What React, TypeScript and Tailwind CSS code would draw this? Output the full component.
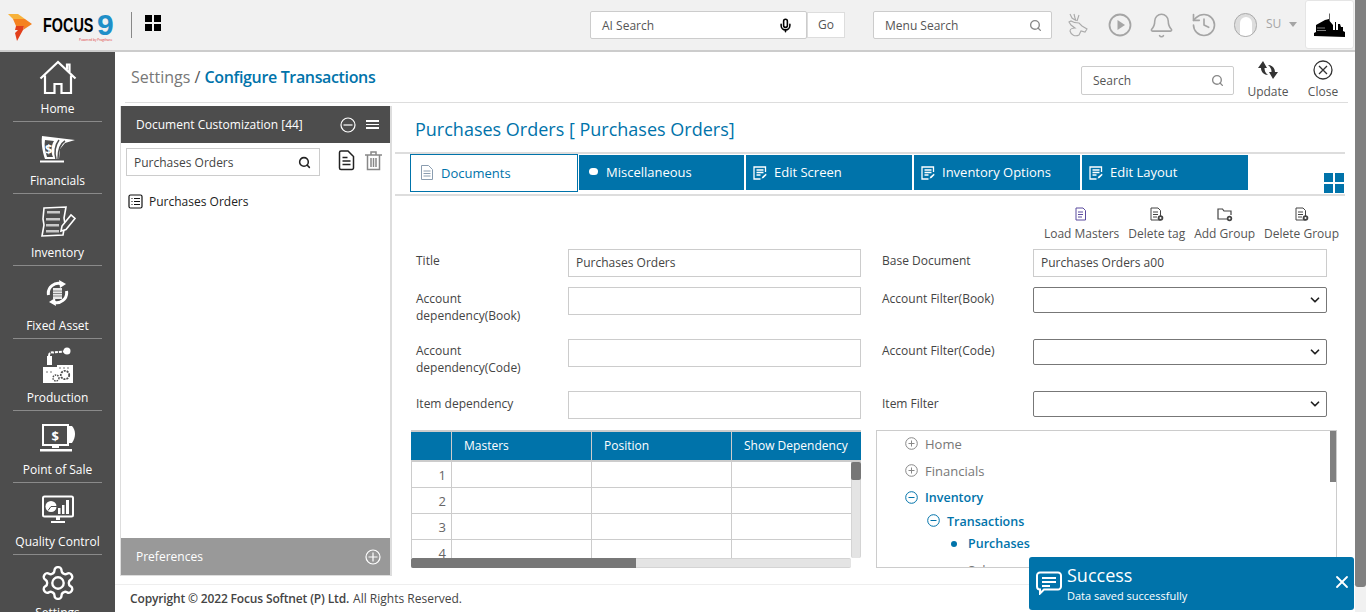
import { Bell, ChevronDown, History, Mic, Search, X } from "lucide-react";
import type { ReactNode } from "react";

const font = { fontFamily: '"Open Sans", "Noto Sans", sans-serif' };

function HomeIcon() {
  return (
    <svg width="38" height="36" viewBox="0 0 38 36" fill="none" stroke="#fff" strokeWidth="2.2">
      <path d="M1.500 18.500 19 2l17.500 16.500M28 9.500V4.500h2.500v7.500M6 15.500V33h9.500V24h7v9H32V15.500" />
    </svg>
  );
}

function FinancialsIcon() {
  return (
    <svg width="38" height="28" viewBox="0 0 38 28" fill="none">
      <path d="M3 1 36 5 26 8 21 14 20 24H6C4 18 2 10 3 1z" fill="#fff" />
      <path d="M6 5 15 6C12 10 12 18 14 22H8C6 16 5 10 6 5z" fill="#4d4d4d" />
      <path d="M20 5C16 10 15 18 17 24M26 6C21 9 19 15 19 24" stroke="#4d4d4d" strokeWidth="1.5" />
      <text x="6" y="19" fill="#fff" fontSize="13" fontWeight="700" fontFamily="Open Sans">$</text>
      <path d="M1 25.500h24v2H1z" fill="#fff" />
    </svg>
  );
}

function InventoryIcon() {
  return (
    <svg width="36" height="31" viewBox="0 0 36 31" fill="none">
      <path d="M4 2 26 1 24 12 25 18 23 29 2 30 4 19 3 13z" stroke="#fff" strokeWidth="1.600" />
      <path d="M7 5h13v2.500H7zM6 12h14v2.500H6zM6 18h13v2.500H6zM6 24h13v2.500H6z" fill="#c8c8c8" />
      <path d="M21 25 22 20 31 9l4 3.500-9 11z" fill="#4d4d4d" stroke="#fff" strokeWidth="1.600" />
    </svg>
  );
}

function FixedAssetIcon() {
  return (
    <svg width="23" height="26" viewBox="0 0 23 26" fill="none">
      <path d="M16 4A10 10 0 0 0 2.500 15M7 22A10 10 0 0 0 20.500 11" stroke="#fff" strokeWidth="3" />
      <path d="m13 0 7 4-6 4zM10 26l-7-4 6-4z" fill="#fff" />
      <path d="M7 8h9v11H7z" fill="#e8e8e8" />
      <path d="M7 11h9M7 13.500h9M7 16h9" stroke="#888" />
    </svg>
  );
}

function ProductionIcon() {
  return (
    <svg width="32" height="37" viewBox="0 0 32 37" fill="none">
      <path d="M7 9C7 6 9 5 11 5.500L22 4.500" stroke="#fff" strokeWidth="2" strokeDasharray="3 1" />
      <circle cx="25" cy="4" r="3.500" fill="#fff" />
      <path d="M5 9h5v9H5z" fill="#fff" />
      <path d="M1 36V20h14v-2h16v18z" fill="#fff" />
      <path d="M4 25h2m2 0h2M17 21h2m2 0h2m2 0h2" stroke="#777" />
      <circle cx="23" cy="28" r="4.200" fill="#fff" stroke="#4d4d4d" strokeWidth="1.800" strokeDasharray="2 1" />
      <circle cx="14" cy="31" r="3" fill="#fff" stroke="#4d4d4d" strokeWidth="1.400" strokeDasharray="1.500 1" />
    </svg>
  );
}

function PosIcon() {
  return (
    <svg width="38" height="28" viewBox="0 0 38 28" fill="none">
      <rect x="4" y="1" width="25" height="20" fill="none" stroke="#fff" strokeWidth="2" />
      <path d="M30 2h3c2 2 3 5 3 8s-1 6-3 9h-3z" fill="#fff" />
      <text x="12.500" y="17" fill="#fff" fontSize="13" fontWeight="700" fontFamily="Open Sans">$</text>
      <path d="M13 21h7v3h-7zM1 25h32v2.500H1z" fill="#fff" />
    </svg>
  );
}

function QualityIcon() {
  return (
    <svg width="34" height="30" viewBox="0 0 34 30" fill="none">
      <rect x="2" y="1.500" width="30" height="20" rx="1.500" stroke="#fff" strokeWidth="2" />
      <circle cx="10" cy="11.500" r="5.500" fill="#fff" />
      <path d="M10 11.500h6M10 11.500l-3 4" stroke="#4d4d4d" />
      <path d="M17 13h2.500v6H17zM21 10h2.500v9H21zM25 5h3v14h-3z" fill="#fff" />
      <path d="M15 22h4v3h-4zM10 26h14v2H10z" fill="#fff" />
    </svg>
  );
}

function SettingsIcon() {
  return (
    <svg width="38" height="38" viewBox="0 0 24 24" fill="none" stroke="#fff" strokeWidth="1.5" strokeLinecap="round" strokeLinejoin="round">
      <path d="M12.220 2h-.44a2 2 0 0 0-2 2v.18a2 2 0 0 1-1 1.730l-.43.25a2 2 0 0 1-2 0l-.15-.08a2 2 0 0 0-2.730.73l-.22.38a2 2 0 0 0 .73 2.730l.15.1a2 2 0 0 1 1 1.720v.51a2 2 0 0 1-1 1.740l-.15.09a2 2 0 0 0-.73 2.730l.22.38a2 2 0 0 0 2.730.73l.15-.08a2 2 0 0 1 2 0l.43.25a2 2 0 0 1 1 1.730V20a2 2 0 0 0 2 2h.44a2 2 0 0 0 2-2v-.18a2 2 0 0 1 1-1.730l.43-.25a2 2 0 0 1 2 0l.15.08a2 2 0 0 0 2.730-.73l.22-.39a2 2 0 0 0-.73-2.730l-.15-.08a2 2 0 0 1-1-1.740v-.5a2 2 0 0 1 1-1.740l.15-.09a2 2 0 0 0 .73-2.730l-.22-.38a2 2 0 0 0-2.730-.73l-.15.08a2 2 0 0 1-2 0l-.43-.25a2 2 0 0 1-1-1.730V4a2 2 0 0 0-2-2z" />
      <circle cx="12" cy="12" r="3.600" />
    </svg>
  );
}

const navItems: { label: string; icon: ReactNode }[] = [
  { label: "Home", icon: <HomeIcon /> },
  { label: "Financials", icon: <FinancialsIcon /> },
  { label: "Inventory", icon: <InventoryIcon /> },
  { label: "Fixed Asset", icon: <FixedAssetIcon /> },
  { label: "Production", icon: <ProductionIcon /> },
  { label: "Point of Sale", icon: <PosIcon /> },
  { label: "Quality Control", icon: <QualityIcon /> },
];

function Sidebar() {
  return (
    <aside className="w-[115px] shrink-0 bg-[#4d4d4d] flex flex-col items-center overflow-hidden text-white text-[12px]">
      {navItems.map((item, i) => (
        <div
          key={item.label}
          className={`w-[89px] shrink-0 border-b border-[#8a8a8a] flex flex-col items-center ${i === 0 ? "h-[70px]" : "h-[72.2px]"}`}
        >
          <div className="flex-1 flex items-center justify-center pt-[4px]">{item.icon}</div>
          <div className="h-[17px] leading-[17px] mb-[4px] whitespace-nowrap">{item.label}</div>
        </div>
      ))}
      <div className="shrink-0 pt-[9px] flex flex-col items-center">
        <SettingsIcon />
        <div className="leading-[17px] mt-[2px]">Settings</div>
      </div>
    </aside>
  );
}

function Logo() {
  return (
    <div className="relative flex items-center w-[131px] pl-[8px]">
      <svg width="24" height="27" viewBox="0 0 24 27" className="shrink-0 mt-[4px]">
        <path d="M0 0h10l7 5H5z" fill="#f7b23b" />
        <path d="M5 5h12l7 5-9 6 1-4H8z" fill="#f58220" />
        <path d="M8 12h8l-1 4-6 11-2-8 3-3H7z" fill="#e2401c" />
      </svg>
      <span
        className="ml-[11px] w-[50px] text-[20px] font-bold text-black scale-x-[0.72] origin-left inline-block"
        style={{ fontFamily: '"Liberation Sans", sans-serif' }}
      >
        FOCUS
      </span>
      <span
        className="ml-[4px] text-[30px] leading-none font-bold text-[#1f8fc8]"
        style={{ fontFamily: '"Liberation Sans", sans-serif' }}
      >
        9
      </span>
      <span className="absolute left-[79px] top-[29px] text-[3.2px] leading-none text-[#d33] whitespace-nowrap">
        Powered by Pragtharo
      </span>
    </div>
  );
}

function SearchBox({ label, className }: { label: string; className: string }) {
  return (
    <div className={`bg-white border border-[#ccc] rounded-[2px] flex items-center justify-between pl-[11px] pr-[9px] text-[12px] text-[#555] ${className}`}>
      <span className="pt-[1px]">{label}</span>
      <Search size={13} strokeWidth={2.5} className="text-[#888]" />
    </div>
  );
}

function TopBar() {
  return (
    <header className="h-[52px] shrink-0 bg-[#f1f1f1] border-b-2 border-[#ccc] flex items-start">
      <div className="h-[50px] flex items-center">
        <Logo />
        <div className="w-px h-[26px] bg-[#888]" />
        <div className="ml-[13px] mb-[4px] grid grid-cols-2 gap-[2px] w-[16px] h-[16px]">
          <div className="bg-black" />
          <div className="bg-black" />
          <div className="bg-black" />
          <div className="bg-black" />
        </div>
      </div>
      <div className="ml-[429px] mt-[11px] flex items-start">
        <div className="w-[217px] h-[28px] bg-white border border-[#ccc] rounded-[2px] flex items-center justify-between pl-[11px] pr-[13px] text-[12px] text-[#555]">
          <span className="pt-[1px]">AI Search</span>
          <Mic size={15} strokeWidth={2.5} className="text-black" />
        </div>
        <div className="w-[38px] h-[26px] mt-[1px] bg-white border border-[#ddd] flex items-center justify-center text-[12px] text-[#555]">Go</div>
        <SearchBox label="Menu Search" className="w-[179px] h-[28px] ml-[28px]" />
      </div>
      <div className="flex items-center h-[50px] ml-[13px] text-[#a5a5a5]">
        <svg width="20" height="24" viewBox="0 0 20 24" fill="none" stroke="#aaa" strokeWidth="1.100" className="ml-[3px]">
          <path d="M2 1l2 4 3 2M6 1l1 4 1 3M11 2 9 8" />
          <path d="M3 8c3 2 6 2 8 2l3 3 5 3-2 3-4-1-2 4c-4 2-8 0-9-4 0-2 3-3 5-3L3 12 1 9z" />
        </svg>
        <svg width="24" height="24" viewBox="0 0 24 24" fill="none" className="ml-[20px]">
          <circle cx="12" cy="12" r="10.500" stroke="#a5a5a5" strokeWidth="1.800" />
          <path d="M9.500 7v10l7.500-5z" fill="#a5a5a5" />
        </svg>
        <Bell size={27} strokeWidth={1.4} className="ml-[16px]" />
        <History size={28} strokeWidth={1.4} className="ml-[15px]" />
        <div className="ml-[16px] w-[23px] h-[24px] rounded-full border border-[#aaa] bg-[#ddd] flex items-end justify-center overflow-hidden">
          <div className="w-[12px] h-[19px] rounded-t-full bg-white" />
        </div>
        <span className="ml-[9px] text-[12px] mb-[3px]">SU</span>
        <div className="ml-[8px] mb-[2px] w-0 h-0 border-x-[4px] border-x-transparent border-t-[5px] border-t-[#a5a5a5]" />
        <div className="ml-[8px] w-[49px] h-[49px] mb-[1px] bg-white border border-[#e5e5e5] rounded-[3px] flex items-center justify-center">
          <svg width="34" height="24" viewBox="0 0 34 24">
            <path d="M1 23V20l2-1V12l9-5 4-1V.5h.6V8l3.400 4v5h2V9h1v8h2v-6h2l1 3h2v4l2 1v5z" fill="#000" />
            <path d="M4 15h8M4 17.500h9" stroke="#fff" strokeWidth="0.500" />
          </svg>
        </div>
      </div>
    </header>
  );
}

function LeftPanel() {
  return (
    <div className="w-[272px] h-[470px] shrink-0 border-l border-r-2 border-b border-[#ddd] flex flex-col">
      <div className="h-[37px] shrink-0 bg-[#4d4d4d] flex items-center text-white text-[12px] pl-[15px] pr-[11px]">
        <span className="flex-1">Document Customization [44]</span>
        <svg width="16" height="16" viewBox="0 0 16 16" fill="none" stroke="#fff" strokeWidth="1.2">
          <circle cx="8" cy="8" r="7" />
          <path d="M3.500 8h9" />
        </svg>
        <div className="ml-[10px] w-[13px] flex flex-col gap-[2px]">
          <div className="h-[1.5px] bg-white" />
          <div className="h-[1.5px] bg-white" />
          <div className="h-[1.5px] bg-white" />
        </div>
      </div>
      <div className="flex items-start pl-[5px] pt-[5px]">
        <div className="w-[194px] h-[28px] border border-[#ccc] flex items-center justify-between pl-[7px] pr-[8px] text-[12px] text-[#444]">
          <span className="pt-[1px]">Purchases Orders</span>
          <Search size={13} strokeWidth={2.8} className="text-[#222]" />
        </div>
        <svg width="17" height="21" viewBox="0 0 17 21" fill="none" stroke="#222" strokeWidth="1.5" className="ml-[18px] mt-[2px]">
          <path d="M1.500 2.500a1.500 1.500 0 0 1 1.500-1.500h7l5.500 5.500V18a1.500 1.500 0 0 1-1.500 1.500H3A1.500 1.500 0 0 1 1.500 18z" />
          <path d="M4.500 7.500h5M4.500 11h8M4.500 14.500h8" />
        </svg>
        <svg width="17" height="20" viewBox="0 0 17 20" fill="none" stroke="#888" strokeWidth="1.5" className="ml-[10px] mt-[3px]">
          <path d="M0 4h17M6 4V1h5v3M2.500 4v14.500h12V4M6 7v9M8.500 7v9M11 7v9" />
        </svg>
      </div>
      <div className="flex items-center pl-[7px] mt-[17px] text-[12px] text-[#222]">
        <svg width="15" height="15" viewBox="0 0 15 15" fill="none" stroke="#111" strokeWidth="1.2" className="mb-[2px]">
          <rect x="1" y="1" width="13" height="13" rx="1.5" />
          <path d="M3.500 4.500h1M6 4.500h6M3.500 7.500h1M6 7.500h6M3.500 10.500h1M6 10.500h6" />
        </svg>
        <span className="ml-[6px]">Purchases Orders</span>
      </div>
      <div className="mt-auto h-[37px] bg-[#999] flex items-center justify-between pl-[15px] pr-[9px] text-white text-[12px]">
        <span>Preferences</span>
        <svg width="16" height="16" viewBox="0 0 16 16" fill="none" stroke="#fff" strokeWidth="1.2">
          <circle cx="8" cy="8" r="7" />
          <path d="M3.500 8h9M8 3.500v9" />
        </svg>
      </div>
    </div>
  );
}

function EditIcon() {
  return (
    <svg width="14" height="14" viewBox="0 0 14 14" fill="none" stroke="#fff" strokeWidth="1.3">
      <path d="M12.500 6V1H1v12h6.500" />
      <path d="M3.500 4h7M3.500 6.500h7M3.500 9h4" />
      <path d="m8.500 12.500 1-2 3.500-3 .5 1.500-3 3z" fill="#fff" stroke="none" />
    </svg>
  );
}

const tabs = [
  { label: "Miscellaneous", icon: <div className="w-[9px] h-[7px] rounded-full bg-white mb-[2px] ml-[3px] mr-[1px]" /> },
  { label: "Edit Screen", icon: <EditIcon /> },
  { label: "Inventory Options", icon: <EditIcon /> },
  { label: "Edit Layout", icon: <EditIcon /> },
];

function Tabs() {
  return (
    <div className="flex items-start h-[42px] border-b-2 border-[#ddd] pl-[15px]">
      <div className="w-[168px] h-[38px] border border-[#0073aa] flex items-center pl-[10px] text-[13px] text-[#0073aa]">
        <svg width="12" height="15" viewBox="0 0 12 15" fill="none" stroke="#8a9db0" strokeWidth="1" className="mb-[2px]">
          <path d="M.5.5h7l4 4v10H.5z" />
          <path d="M2.500 6h7M2.500 8.500h7M2.500 11h7" />
        </svg>
        <span className="ml-[8px] mt-[2px]">Documents</span>
      </div>
      {tabs.map((tab, i) => (
        <div
          key={tab.label}
          className={`mt-[1px] h-[35px] bg-[#0073aa] flex items-center gap-[7px] pl-[7px] text-[13px] text-white ${i === 0 ? "w-[165px] ml-[1px]" : "w-[166px] ml-[2px]"}`}
        >
          {tab.icon}
          <span>{tab.label}</span>
        </div>
      ))}
      <div className="ml-auto mr-[1px] mt-[19px] grid grid-cols-2 gap-[2px] w-[20px] h-[20px]">
        <div className="bg-[#0073aa]" />
        <div className="bg-[#0073aa]" />
        <div className="bg-[#0073aa]" />
        <div className="bg-[#0073aa]" />
      </div>
    </div>
  );
}

function ActionIcon({ folder, lines }: { folder?: boolean; lines?: boolean }) {
  if (folder)
    return (
      <svg width="16" height="15" viewBox="0 0 16 15" fill="none" stroke="#444" strokeWidth="1.2">
        <path d="M1 3V12h9M14 8V4H7L5.500 2H1v1" />
        <circle cx="12.500" cy="11.500" r="2.700" fill="#444" stroke="none" />
        <circle cx="12.500" cy="11.500" r="1" fill="#fff" stroke="none" />
      </svg>
    );
  return (
    <svg width="15" height="15" viewBox="0 0 15 15" fill="none" stroke={lines ? "#5b4a9e" : "#444"} strokeWidth="1">
      <path d="M2 1h7l2.500 2.500V13H2z" />
      <path d="M4 5h5M4 7.500h5M4 10h4" />
      {!lines && <circle cx="11.500" cy="11" r="2.800" fill="#444" stroke="none" />}
      {!lines && <circle cx="11.500" cy="11" r="1" fill="#fff" stroke="none" />}
    </svg>
  );
}

function ActionBar() {
  const items = [
    { label: "Load Masters", lines: true },
    { label: "Delete tag" },
    { label: "Add Group", folder: true },
    { label: "Delete Group" },
  ];
  return (
    <div className="flex justify-end gap-[9px] pr-[6px] pt-[11px] h-[53px] text-[12px] text-[#555]">
      {items.map((item) => (
        <div key={item.label} className="flex flex-col items-center">
          <ActionIcon folder={item.folder} lines={item.lines} />
          <span className="leading-[17px] mt-[3px] whitespace-nowrap">{item.label}</span>
        </div>
      ))}
    </div>
  );
}

function Field({ value }: { value?: string }) {
  return <div className="h-[28px] border border-[#ccc] px-[7px] flex items-center text-[12px] text-[#444]">{value}</div>;
}

function SelectField() {
  return (
    <div className="h-[26px] border border-[#777] rounded-[2px] flex items-center justify-end pr-[4px]">
      <ChevronDown size={14} strokeWidth={3} className="text-[#222]" />
    </div>
  );
}

function Label({ children, tall, low }: { children: ReactNode; tall?: boolean; low?: boolean }) {
  return (
    <div className={`text-[12px] leading-[17px] text-[#444] ${low ? "pt-[4px]" : "pt-[3px]"} ${tall ? "h-[42px]" : "h-[28px]"}`}>
      {children}
    </div>
  );
}

function Form() {
  return (
    <div className="grid grid-cols-[152px_293px_172px_294px] gap-y-[10px] pl-[21px]">
      <Label>Title</Label>
      <Field value="Purchases Orders" />
      <div className="pl-[21px]"><Label>Base Document</Label></div>
      <Field value="Purchases Orders a00" />

      <Label tall>Account<br />dependency(Book)</Label>
      <Field />
      <div className="pl-[21px]"><Label>Account Filter(Book)</Label></div>
      <SelectField />

      <Label tall>Account<br />dependency(Code)</Label>
      <Field />
      <div className="pl-[21px]"><Label>Account Filter(Code)</Label></div>
      <SelectField />

      <Label low>Item dependency</Label>
      <Field />
      <div className="pl-[21px]"><Label low>Item Filter</Label></div>
      <SelectField />
    </div>
  );
}

function MastersGrid() {
  return (
    <div className="w-[450px] h-[138px] shrink-0">
      <div className="h-[32px] bg-[#0073aa] border-y-2 border-[#ccc] grid grid-cols-[41px_140px_140px_129px] text-[12px] text-white">
        <div className="border-r border-[#ccc]" />
        <div className="border-r border-[#ccc] pl-[12px] flex items-center">Masters</div>
        <div className="border-r border-[#ccc] pl-[12px] flex items-center">Position</div>
        <div className="pl-[12px] flex items-center whitespace-nowrap">Show Dependency</div>
      </div>
      <div className="flex h-[96px]">
        <div className="w-[440px] border-l border-[#ccc] overflow-hidden">
          {[1, 2, 3, 4].map((n) => (
            <div key={n} className="h-[26px] shrink-0 border-b border-[#ccc] grid grid-cols-[40px_140px_140px_119px] text-[13px] font-medium text-[#666]">
              <div className="border-r border-[#ccc] flex items-center justify-end pr-[5px] pt-[2px]">{n}</div>
              <div className="border-r border-[#ccc]" />
              <div className="border-r border-[#ccc]" />
              <div />
            </div>
          ))}
        </div>
        <div className="w-[10px] bg-[#e4e4e4] rounded-b-[2px] border-x border-[#d4d4d4]">
          <div className="h-[18px] bg-[#777] rounded-[2px] -mx-px" />
        </div>
      </div>
      <div className="w-[440px] h-[10px] bg-[#e4e4e4] rounded-[2px] border-y border-[#d4d4d4]">
        <div className="w-[225px] h-[10px] -mt-px bg-[#777] rounded-l-[2px]" />
      </div>
    </div>
  );
}

function TreeToggle({ open, blue }: { open?: boolean; blue?: boolean }) {
  const color = blue ? "#0073aa" : "#888";
  return (
    <svg width="13" height="13" viewBox="0 0 13 13" fill="none" stroke={color} strokeWidth="1" className="shrink-0 mb-[3px]">
      <circle cx="6.500" cy="6.500" r="5.800" />
      <path d="M3.500 6.500h6" />
      {!open && <path d="M6.500 3.500v6" />}
    </svg>
  );
}

function Tree() {
  return (
    <div className="w-[461px] h-[138px] ml-[15px] border border-[#ccc] relative overflow-hidden text-[13px]">
      <div className="absolute right-0 top-0 w-[6px] h-[51px] bg-[#808080]" />
      <div className="flex items-center gap-[7px] pl-[28px] h-[27px] text-[#777]">
        <TreeToggle />
        <span>Home</span>
      </div>
      <div className="flex items-center gap-[7px] pl-[28px] h-[27px] text-[#777]">
        <TreeToggle />
        <span>Financials</span>
      </div>
      <div className="flex items-center gap-[7px] pl-[28px] h-[27px] text-[12.5px] text-[#0073aa] font-semibold">
        <TreeToggle open blue />
        <span>Inventory</span>
      </div>
      <div className="flex items-center gap-[7px] pl-[50px] h-[20px] text-[12.5px] text-[#0073aa] font-semibold">
        <TreeToggle open blue />
        <span>Transactions</span>
      </div>
      <div className="flex items-center pl-[74px] h-[24px] text-[12.5px] text-[#0073aa] font-semibold">
        <div className="w-[6px] h-[6px] rounded-full bg-[#0073aa]" />
        <span className="ml-[11px]">Purchases</span>
      </div>
      <div className="flex items-center pl-[91px] h-[30px] shrink-0 text-[#777]">Sales</div>
    </div>
  );
}

function Toast() {
  return (
    <div className="absolute left-[1029px] top-[557px] w-[325px] h-[53px] bg-[#0073aa] rounded-[3px] flex text-white">
      <svg width="26" height="24" viewBox="0 0 26 24" fill="none" className="ml-[7px] mt-[14px] shrink-0">
        <path d="M4 1.500h18a3 3 0 0 1 3 3v11a3 3 0 0 1-3 3H8l-4 4v-4a3 3 0 0 1-3-3v-11a3 3 0 0 1 3-3z" stroke="#fff" strokeWidth="2" />
        <path d="M6 6h14v2H6zM6 10h14v2H6zM6 14h8v2H6z" fill="#fff" />
      </svg>
      <div className="ml-[5px]">
        <div className="text-[18px] leading-[25px] mt-[6px]">Success</div>
        <div className="text-[11px] leading-[15px]">Data saved successfully</div>
      </div>
      <X size={20} strokeWidth={2.2} className="ml-auto mr-[2px] mt-[15px]" />
    </div>
  );
}

export default function App() {
  return (
    <div className="relative w-[1366px] h-[612px] overflow-hidden flex bg-white" style={font}>
      <div className="w-[1355px] flex flex-col">
        <TopBar />
        <div className="flex flex-1 min-h-0">
          <Sidebar />
          <main className="flex-1 min-w-0 flex flex-col">
            <div className="flex-1 min-h-0">
              <div className="h-[51px] ml-[10px] mr-[7px] border-b border-[#ddd] flex items-start">
                <div className="ml-[6px] mt-[13px] text-[16px] text-[#777]">
                  Settings <span className="text-[#555]">/</span>{" "}
                  <span className="font-semibold text-[#0073aa] tracking-[-0.35px]">Configure Transactions</span>
                </div>
                <SearchBox label="Search" className="w-[153px] h-[29px] ml-auto mt-[14px]" />
                <div className="w-[66px] flex flex-col items-center text-[12px] text-[#555] ml-[1px] mt-[8px]">
                  <svg width="22" height="20" viewBox="0 0 22 20" fill="#333">
                    <path d="M6 1 10 8H7.500c0 3 1 5 3.500 7-4 0-7-3-7-7H1zM16 19l-4-7h2.500c0-3-1-5-3.500-7 4 0 7 3 7 7h3z" />
                  </svg>
                  <span className="leading-[17px] mt-[3px]">Update</span>
                </div>
                <div className="w-[44px] flex flex-col items-center text-[12px] text-[#555] mr-[3px] mt-[8px]">
                  <svg width="20" height="20" viewBox="0 0 20 20" fill="none" stroke="#333" strokeWidth="1.3">
                    <circle cx="10" cy="10" r="9" />
                    <path d="m6 6 8 8M14 6l-8 8" />
                  </svg>
                  <span className="leading-[17px] mt-[3px]">Close</span>
                </div>
              </div>
              <div className="flex pl-[5px] pt-[3px]">
                <LeftPanel />
                <div className="w-[950px] ml-[3px] shrink-0">
                  <div className="h-[48px] border-b-2 border-[#ddd] pl-[20px] flex items-center text-[18px] text-[#0073aa]">
                    Purchases Orders [ Purchases Orders]
                  </div>
                  <Tabs />
                  <ActionBar />
                  <Form />
                  <div className="flex pl-[16px] mt-[11px]">
                    <MastersGrid />
                    <Tree />
                  </div>
                </div>
              </div>
            </div>
            <div className="h-[28px] shrink-0 border-t border-[#eee] pl-[15px] flex items-center text-[12px] text-[#444]">
              <span className="font-semibold mr-[4px] tracking-[-0.15px]">Copyright © 2022 Focus Softnet (P) Ltd.</span> All Rights Reserved.
            </div>
          </main>
        </div>
      </div>
      <div className="w-[11px] h-full bg-[#f1f1f1]">
        <div className="h-[587px] bg-[#808080] rounded-b-[3px]" />
      </div>
      <Toast />
    </div>
  );
}
